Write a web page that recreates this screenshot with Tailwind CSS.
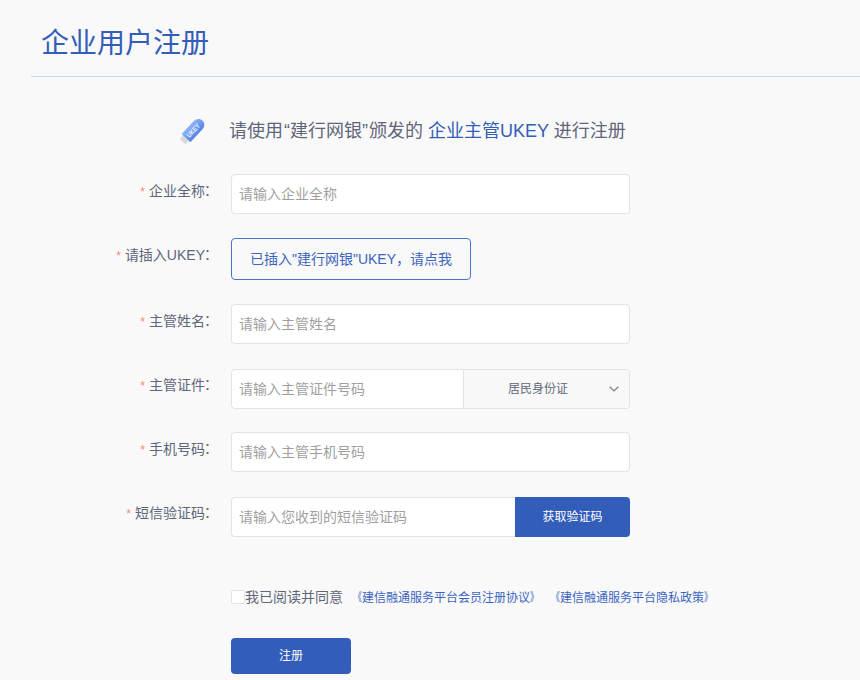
<!DOCTYPE html>
<html lang="zh-CN">
<head>
<meta charset="utf-8">
<title>企业用户注册</title>
<script src="https://cdn.jsdelivr.net/npm/@tailwindcss/browser@4"></script>
</head>
<body class="h-[680px] w-[860px] overflow-hidden bg-[#f9f9f9] font-['Liberation_Sans','Noto_Sans_CJK_SC',sans-serif] text-sm text-[#5f667a]">
<header class="ml-[31px] flex h-[77px] items-center border-b border-[#c5daf3] pt-[11px] pl-2.5">
  <h1 class="text-[28px] leading-10 text-[#325db8]">企业用户注册</h1>
</header>
<main>
  <div class="flex h-[97px] items-center pt-[11px] pl-[179px]">
    <svg class="mr-6 h-[26px] w-[26px]" viewBox="0 0 26 26">
      <defs>
        <linearGradient id="stick" x1="0" y1="0" x2="1" y2="0"><stop offset="0" stop-color="#8fb4f6"/><stop offset=".5" stop-color="#6e9cf0"/><stop offset="1" stop-color="#5583e2"/></linearGradient>
      </defs>
      <g transform="translate(13.500 13.200) rotate(43)">
        <rect x="-4" y="8" width="8" height="6.500" rx="1" fill="#d9dadd"/>
        <path d="M-6 8.500V-7.500C-6-17 6-17 6-7.500V8.500Q6 9.500 5 9.500H-5Q-6 9.500-6 8.500Z" fill="url(#stick)"/>
        <text transform="rotate(-90)" x="1" y="2.400" text-anchor="middle" font-family="Liberation Sans" font-size="7" font-weight="700" fill="#e9f1ff" textLength="16" lengthAdjust="spacingAndGlyphs">UKEY</text>
      </g>
    </svg>
    <p class="text-lg leading-7 whitespace-pre">请使用<span class="ml-px">“</span>建行网银”<span class="ml-px">颁发的</span> <span class="text-[#325db8]">企业主管UKEY</span> 进行注册</p>
  </div>
  <form class="flex flex-col">
    <div class="flex h-16">
      <label class="w-[219px] pt-[7px] text-right leading-5"><span class="mr-1 text-xs text-[#f28b70]">*</span>企业全称<span class="relative -top-px -left-px">：</span></label>
      <div class="ml-3 flex h-10 w-[399px] items-center rounded border border-[#e1e3e8] bg-white px-[7px] text-[#9f9f9f]">请输入企业全称</div>
    </div>
    <div class="flex h-[66px]">
      <label class="w-[219px] pt-[7px] text-right leading-5"><span class="mr-1 text-xs text-[#f28b70]">*</span>请插入UKEY<span class="relative -top-px -left-px">：</span></label>
      <button type="button" class="ml-3 flex h-[42px] w-[240px] items-center justify-center rounded border border-[#4a74cb] text-[#3a65bf]">已插入"建行网银"UKEY，请点我</button>
    </div>
    <div class="flex h-[65px]">
      <label class="w-[219px] pt-[7px] text-right leading-5"><span class="mr-1 text-xs text-[#f28b70]">*</span>主管姓名<span class="relative -top-px -left-px">：</span></label>
      <div class="ml-3 flex h-10 w-[399px] items-center rounded border border-[#e1e3e8] bg-white px-[7px] text-[#9f9f9f]">请输入主管姓名</div>
    </div>
    <div class="flex h-[63px]">
      <label class="w-[219px] pt-1.5 text-right leading-5"><span class="mr-1 text-xs text-[#f28b70]">*</span>主管证件<span class="relative -top-px -left-px">：</span></label>
      <div class="ml-3 flex h-10 w-[399px] rounded border border-[#e1e3e8] bg-white">
        <div class="flex w-[231px] items-center px-[7px] text-[#9f9f9f]">请输入主管证件号码</div>
        <div class="flex flex-1 items-center rounded-r-[3px] border-l border-[#e1e3e8] bg-[#f8f8f8] pr-2.5 text-xs">
          <span class="flex-1 pl-11">居民身份证</span>
          <svg class="h-2.5 w-2.5" viewBox="0 0 10 10" fill="none" stroke="#777d8e" stroke-width="1.200"><path d="M.7 2.800 5 7 9.300 2.800"/></svg>
        </div>
      </div>
    </div>
    <div class="flex h-[65px]">
      <label class="w-[219px] pt-[7px] text-right leading-5"><span class="mr-1 text-xs text-[#f28b70]">*</span>手机号码<span class="relative -top-px -left-px">：</span></label>
      <div class="ml-3 flex h-10 w-[399px] items-center rounded border border-[#e1e3e8] bg-white px-[7px] text-[#9f9f9f]">请输入主管手机号码</div>
    </div>
    <div class="flex h-[89px]">
      <label class="w-[219px] pt-1.5 text-right leading-5"><span class="mr-1 text-xs text-[#f28b70]">*</span>短信验证码<span class="relative -top-px -left-px">：</span></label>
      <div class="ml-3 flex h-10 w-[284px] items-center rounded-l border border-r-0 border-[#e1e3e8] bg-white px-[7px] text-[#9f9f9f]">请输入您收到的短信验证码</div>
      <button type="button" class="h-10 w-[115px] rounded-r bg-[#325db8] text-xs text-white">获取验证码</button>
    </div>
    <div class="ml-[231px] flex h-[52px] items-start leading-5">
      <span class="mt-1 h-3.5 w-3.5 rounded-xs border border-[#e1e3e8] bg-white"></span>
      <span class="pt-px">我已阅读并同意</span>
      <a class="ml-[7px] pt-0.5 text-xs leading-5 text-[#3a65bf]"><span class="inline-block origin-right scale-x-70">《</span>建信融通服务平台会员注册协议<span class="inline-block origin-left scale-x-70">》</span></a>
      <a class="ml-[6px] pt-0.5 text-xs leading-5 text-[#3a65bf]"><span class="inline-block origin-right scale-x-70">《</span>建信融通服务平台隐私政策<span class="inline-block origin-left scale-x-70">》</span></a>
    </div>
    <button type="button" class="ml-[231px] h-9 w-[120px] rounded bg-[#325db8] text-xs text-white">注册</button>
  </form>
</main>
</body>
</html>
